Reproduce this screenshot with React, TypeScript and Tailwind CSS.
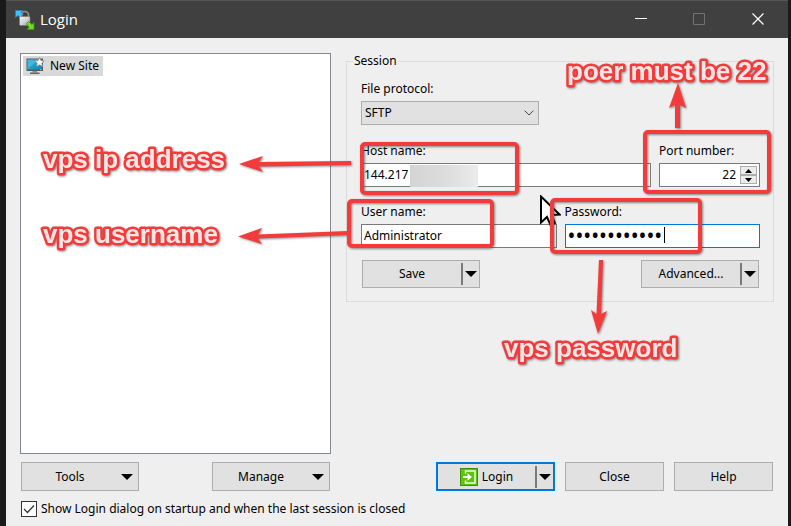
import type { ReactNode } from 'react';

// ─── Icons ────────────────────────────────────────────────────────────────────

function AppIcon() {
	return (
		<svg width="20" height="20" viewBox="0 0 20 20" aria-hidden="true">
			<defs>
				<linearGradient id="lock" x1="0" y1="0" x2="1" y2="1">
					<stop offset="0" stopColor="#f4f4f4" />
					<stop offset="0.55" stopColor="#cfcfcf" />
					<stop offset="1" stopColor="#8c8c8c" />
				</linearGradient>
			</defs>
			<path d="M0.500 0.500h7.500l-2 2 2 2-3 3-2-2-2.500 2z" fill="#3fc3fb" stroke="#1687cf" strokeWidth="0.700" />
			<path d="M6.500 7V5.200a3.500 3.700 0 0 1 7 0V7" fill="none" stroke="#8f8f8f" strokeWidth="1.700" />
			<rect x="4.500" y="6.500" width="10.500" height="9" rx="0.800" fill="url(#lock)" stroke="#777" strokeWidth="0.600" />
			<path d="M11.500 13.500l2-2 3.500 3 2-2v7h-7l2-2z" fill="#6fdc28" stroke="#3a9612" strokeWidth="0.800" />
		</svg>
	);
}

function SiteIcon() {
	return (
		<svg width="19" height="18" viewBox="0 0 19 18" aria-hidden="true">
			<defs>
				<linearGradient id="screen" x1="0" y1="0" x2="1" y2="1">
					<stop offset="0" stopColor="#49c6ea" />
					<stop offset="0.5" stopColor="#17a0cc" />
					<stop offset="1" stopColor="#0d85b4" />
				</linearGradient>
			</defs>
			<rect x="0.500" y="1.500" width="16.500" height="12.500" fill="#555d63" />
			<rect x="1.500" y="2.500" width="14.500" height="10" fill="url(#screen)" />
			<path d="M1.500 12.500v-5l8-5h3z" fill="#fff" opacity="0.150" />
			<path d="M6.500 14h4.500v1.500H6.500z" fill="#8a8f92" />
			<path d="M4 15.500h9.500V17H4z" fill="#5b6266" />
			<path d="M14 12.600h1.500" stroke="#9be33b" />
			<path d="M13.500 0.500l1.500 3 3.200 0.500-2.300 2.200 0.600 3.300-3-1.600-3 1.600 0.600-3.300-2.300-2.200 3.200-0.500z" fill="#f6f6f6" stroke="#858585" strokeWidth="0.800" />
		</svg>
	);
}

function LoginIcon() {
	return (
		<svg width="18" height="18" viewBox="0 0 18 18" aria-hidden="true">
			<rect x="0.500" y="0.500" width="17" height="17" fill="#5cc30f" stroke="#3c8f0b" />
			<path d="M5.500 5.500V3h9.500v12H5.500v-2.500" fill="none" stroke="#e9ffd9" strokeWidth="1.500" />
			<path d="M3 8h4.500V5.200L12 9l-4.500 3.800V10H3z" fill="#fff" />
		</svg>
	);
}

function DownArrow() {
	return (
		<svg width="12" height="6" viewBox="0 0 12 6" aria-hidden="true">
			<path d="M0 0h12L6 6z" fill="#000" />
		</svg>
	);
}

function Pointer() {
	return (
		<svg className="absolute left-[540px] top-[195px]" width="21" height="32" viewBox="0 0 21 32" aria-hidden="true">
			<path d="M1 1.500v26l6-5.500 3.500 8 4.500-2-3.500-8 8-0.500z" fill="#fff" stroke="#000" strokeWidth="2" />
		</svg>
	);
}

// ─── Controls ─────────────────────────────────────────────────────────────────

interface PushButtonProps {
	children: ReactNode;
	arrow?: boolean;
}

function PushButton({ children, arrow }: PushButtonProps) {
	return (
		<button
			type="button"
			className={`relative h-[29px] border border-[#adadad] bg-[#e1e1e1] text-center hover:border-[#0078d7] ${
				arrow ? 'w-[118px] pr-[20px]' : 'w-[99px]'
			}`}
		>
			{children}
			{arrow && (
				<span className="absolute inset-y-0 right-[5px] flex items-center">
					<DownArrow />
				</span>
			)}
		</button>
	);
}

interface SplitButtonProps {
	children: ReactNode;
	menuLabel: string;
	primary?: boolean;
}

function SplitButton({ children, menuLabel, primary }: SplitButtonProps) {
	return (
		<div
			className={`flex items-center bg-[#e1e1e1] ${
				primary ? 'h-[29px] w-[119px] border-2 border-[#0078d7]' : 'h-[28px] w-[118px] border border-[#adadad]'
			}`}
		>
			<button type="button" className="flex h-full flex-1 items-center justify-center gap-1">
				{children}
			</button>
			<span className="h-[22px] w-[2px] bg-[#7a7a7a]" />
			<button type="button" aria-label={menuLabel} className="flex h-full w-4 items-center justify-center">
				<DownArrow />
			</button>
		</div>
	);
}

interface FieldProps {
	id: string;
	label: string;
	className?: string;
	children: ReactNode;
}

function Field({ id, label, className = '', children }: FieldProps) {
	return (
		<div className={className}>
			<label htmlFor={id} className="block w-fit">{label}</label>
			<div className="relative mt-1">{children}</div>
		</div>
	);
}

const INPUT = 'block h-6 w-full border border-[#7a7a7a] bg-white px-0.5 pb-0.5 outline-none';

// ─── Callouts ─────────────────────────────────────────────────────────────────

const BOXES = [
	{ x: 362, y: 144, w: 155, h: 49 },
	{ x: 349, y: 201, w: 143, h: 45 },
	{ x: 552, y: 200, w: 148, h: 52 },
	{ x: 645, y: 132, w: 124, h: 60 },
];

const ARROWS = [
	'M239 164l24-8-4 6 92-1v4l-92 1.500 4 5.500z',
	'M238 236.500l24-8.500-4 6.500 91-3.500v4l-91 3.500 4 5.500z',
	'M678 83l8 25-6-3v23h-5v-23l-6 3z',
	'M598 334l-7-24 5.500 4 2.500-54h4l-2 54 6-3z',
];

const NOTES = [
	{ x: 43, y: 168, text: 'vps ip address' },
	{ x: 43, y: 243, text: 'vps username' },
	{ x: 567, y: 80, text: 'poer must be 22' },
	{ x: 504, y: 357, text: 'vps password' },
];

function Callouts() {
	return (
		<svg className="pointer-events-none absolute inset-0 size-full drop-shadow-[1px_1px_1px_rgba(60,60,60,0.6)]">
			<g fill="none" stroke="#f33b3b" strokeWidth="4">
				{BOXES.map((b) => (
					<rect key={b.x} x={b.x} y={b.y} width={b.w} height={b.h} rx="3" />
				))}
			</g>
			{ARROWS.map((d) => (
				<path key={d} d={d} fill="#f33b3b" />
			))}
			<g
				className="font-['Liberation_Sans',Arial,sans-serif] text-[26px] font-bold"
				fill="#f5e6e6"
				stroke="#f33b3b"
				strokeWidth="5"
				strokeLinejoin="round"
				paintOrder="stroke"
			>
				{NOTES.map((n) => (
					<text key={n.text} x={n.x} y={n.y}>{n.text}</text>
				))}
			</g>
		</svg>
	);
}

// ─── Login dialog ─────────────────────────────────────────────────────────────

export default function App() {
	return (
		<div className="relative flex min-h-screen flex-col bg-[#1a1a1a] pl-1.5 pr-[3px] font-['Noto_Sans',Tahoma,sans-serif] text-[12px] leading-4 text-black">
			<header className="flex h-[38px] items-center border-t border-[#555] bg-[#404040] pl-[9px] text-white">
				<AppIcon />
				<h1 className="ml-[5px] flex-1 pb-0.5 font-['Open_Sans','Segoe_UI',sans-serif] text-[15px] leading-5">Login</h1>
				<button type="button" aria-label="Minimize" className="flex h-full w-[58px] items-center justify-center pb-0.5">
					<svg width="12" height="12" viewBox="0 0 12 12"><path d="M0 5.500h12" stroke="#fff" /></svg>
				</button>
				<button type="button" aria-label="Maximize" disabled className="flex h-full w-[58px] items-center justify-center pb-0.5">
					<svg width="12" height="12" viewBox="0 0 12 12"><path d="M0.500 0.500h11v11h-11z" fill="none" stroke="#727272" /></svg>
				</button>
				<button type="button" aria-label="Close window" className="flex h-full w-[60px] items-center justify-center pb-0.5">
					<svg width="12" height="12" viewBox="0 0 12 12"><path d="M0.500 0.500l11 11M11.500 0.500l-11 11" stroke="#fff" strokeWidth="1.200" /></svg>
				</button>
			</header>

			<main className="flex flex-1 flex-col bg-[#efefef] px-3.5 pb-[7px] pt-[15px]">
				<div className="grid flex-1 grid-cols-[311fr_428fr] gap-[15px]">
					<ul className="border border-[#828790] bg-white p-0.5">
						<li className="flex h-5 w-fit items-center gap-[5px] bg-[#d9d9d9] pl-[3px] pr-1">
							<SiteIcon />
							New Site
						</li>
					</ul>

					<fieldset className="self-start border border-[#dcdcdc] pb-[13px] pl-3.5 pr-[13px]">
						<legend className="-ml-2 px-px">Session</legend>
						<Field id="protocol" label="File protocol:" className="w-[178px] pt-3">
							<select
								id="protocol"
								defaultValue="SFTP"
								className="block h-6 w-full appearance-none border border-[#adadad] bg-[#e1e1e1] pl-[3px] pr-6"
							>
								<option>SFTP</option>
								<option>SCP</option>
								<option>FTP</option>
							</select>
							<svg className="pointer-events-none absolute right-[5px] top-[9px]" width="10" height="6" viewBox="0 0 10 6">
								<path d="M0.700 0.700L5 5l4.300-4.300" fill="none" stroke="#444" />
							</svg>
						</Field>

						<div className="mt-[18px] flex gap-2">
							<Field id="host" label="Host name:" className="flex-1">
								<input id="host" defaultValue="144.217" className={INPUT} />
								<span className="absolute left-[49px] top-0.5 h-[22px] w-[68px] bg-linear-to-r from-[#d4d4d4] via-[#dcdcdc] to-[#ebebeb]" />
							</Field>
							<Field id="port" label="Port number:" className="w-[101px]">
								<input id="port" inputMode="numeric" defaultValue="22" className={`${INPUT} pr-[23px] text-right`} />
								<span className="absolute right-[3px] top-[3px] flex h-[18px] w-[17px] flex-col">
									<button type="button" aria-label="Increase port" className="flex flex-1 items-center justify-center border border-[#adadad] bg-[#ececec]">
										<svg width="7" height="4" viewBox="0 0 7 4"><path d="M0 4h7L3.500 0z" /></svg>
									</button>
									<button type="button" aria-label="Decrease port" className="flex flex-1 items-center justify-center border border-[#adadad] bg-[#ececec]">
										<svg width="7" height="4" viewBox="0 0 7 4"><path d="M0 0h7L3.500 4z" /></svg>
									</button>
								</span>
							</Field>
						</div>

						<div className="mt-[17px] grid grid-cols-2 gap-2">
							<Field id="user" label="User name:">
								<input id="user" defaultValue="Administrator" className={INPUT} />
							</Field>
							<Field id="password" label="Password:">
								<input
									id="password"
									type="password"
									defaultValue="abcdefghijkl"
									className="block h-6 w-full border border-[#0078d7] bg-white px-0.5 pb-0.5 text-[21px] caret-transparent outline-none"
								/>
								<span className="absolute left-[99px] top-[3px] h-4 w-px bg-black" />
							</Field>
						</div>

						<div className="mt-3 flex justify-between px-px">
							<SplitButton menuLabel="Save options">Save</SplitButton>
							<SplitButton menuLabel="Advanced options">Advanced...</SplitButton>
						</div>
					</fieldset>
				</div>

				<div className="mt-2 grid grid-cols-[311fr_428fr] gap-[15px]">
					<div className="flex justify-between px-px">
						<PushButton arrow>Tools</PushButton>
						<PushButton arrow>Manage</PushButton>
					</div>
					<div className="flex justify-end gap-2.5 pr-px">
						<SplitButton primary menuLabel="Login options">
							<LoginIcon />
							Login
						</SplitButton>
						<PushButton>Close</PushButton>
						<PushButton>Help</PushButton>
					</div>
				</div>

				<label className="mt-2 flex h-5 w-fit items-center gap-1 pl-px">
					<span className="relative size-4">
						<input type="checkbox" defaultChecked className="peer block size-4 appearance-none border border-[#333] bg-white" />
						<svg className="pointer-events-none absolute inset-0 hidden peer-checked:block" width="16" height="16" viewBox="0 0 16 16">
							<path d="M3 8l3.500 3.500L13 4.500" fill="none" stroke="#333" strokeWidth="1.300" />
						</svg>
					</span>
					Show Login dialog on startup and when the last session is closed
				</label>
			</main>

			<Pointer />
			<Callouts />
		</div>
	);
}
